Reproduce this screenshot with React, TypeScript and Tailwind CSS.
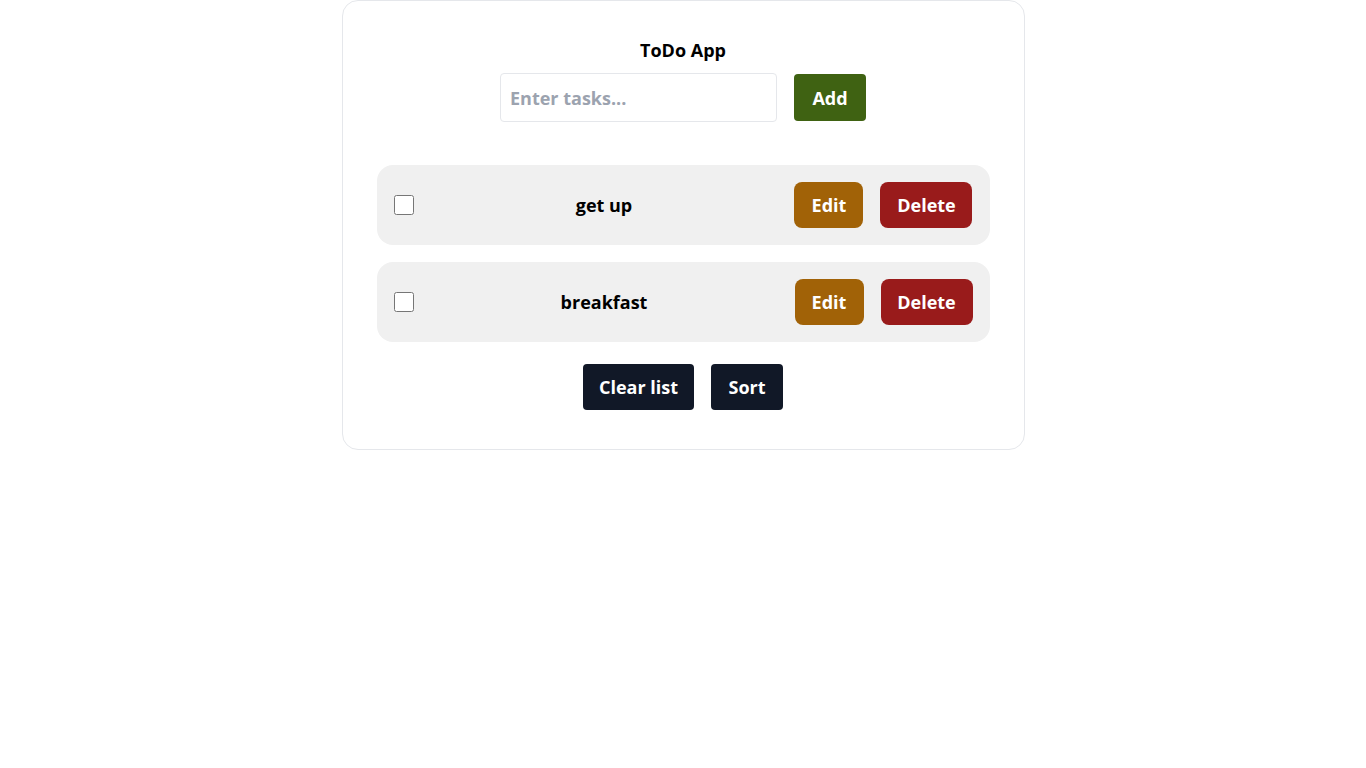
import { useState } from "react";

type Task = { id: number; text: string; done: boolean };

const initial: Task[] = [
  { id: 1, text: "get up", done: false },
  { id: 2, text: "breakfast", done: false },
];

export default function App() {
  const [tasks, setTasks] = useState<Task[]>(initial);
  const [value, setValue] = useState("");

  const add = () => {
    if (!value.trim()) return;
    setTasks([...tasks, { id: Date.now(), text: value.trim(), done: false }]);
    setValue("");
  };

  return (
    <div className="min-h-screen bg-white font-['Open_Sans',sans-serif] text-black">
      <div className="mx-auto w-[683px] rounded-2xl border border-[#e5e7eb] px-[34px] pt-[37px] pb-[39px]">
        <h1 className="text-center text-lg font-bold leading-6">ToDo App</h1>
        <div className="mt-[11px] flex items-center justify-center gap-[17px]">
          <input
            value={value}
            onChange={(e) => setValue(e.target.value)}
            placeholder="Enter tasks..."
            className="h-[49px] w-[277px] rounded border border-[#e5e7eb] px-[9px] text-lg font-bold outline-none placeholder:text-[#9ca3af]"
          />
          <button
            onClick={add}
            className="h-[47px] w-[72px] rounded bg-[#3f6212] text-lg font-bold text-white"
          >
            Add
          </button>
        </div>

        <ul className="mt-[43px] flex flex-col gap-[17px]">
          {tasks.map((t) => (
            <li
              key={t.id}
              className="flex h-[80px] items-center justify-between rounded-2xl bg-[#f0f0f0] px-[17px]"
            >
              <input
                type="checkbox"
                checked={t.done}
                onChange={() =>
                  setTasks(tasks.map((x) => (x.id === t.id ? { ...x, done: !x.done } : x)))
                }
                className="h-5 w-5"
              />
              <span className="text-lg font-bold">{t.text}</span>
              <div className="flex gap-[17px]">
                <button className="h-[46px] w-[69px] rounded-lg bg-[#a16207] text-lg font-bold text-white">
                  Edit
                </button>
                <button
                  onClick={() => setTasks(tasks.filter((x) => x.id !== t.id))}
                  className="h-[46px] w-[92px] rounded-lg bg-[#991b1b] text-lg font-bold text-white"
                >
                  Delete
                </button>
              </div>
            </li>
          ))}
        </ul>

        <div className="mt-[22px] flex justify-center gap-[17px]">
          <button
            onClick={() => setTasks([])}
            className="h-[46px] w-[111px] rounded bg-[#111827] text-lg font-bold text-white"
          >
            Clear list
          </button>
          <button
            onClick={() => setTasks([...tasks].sort((a, b) => a.text.localeCompare(b.text)))}
            className="h-[46px] w-[72px] rounded bg-[#111827] text-lg font-bold text-white"
          >
            Sort
          </button>
        </div>
      </div>
    </div>
  );
}
